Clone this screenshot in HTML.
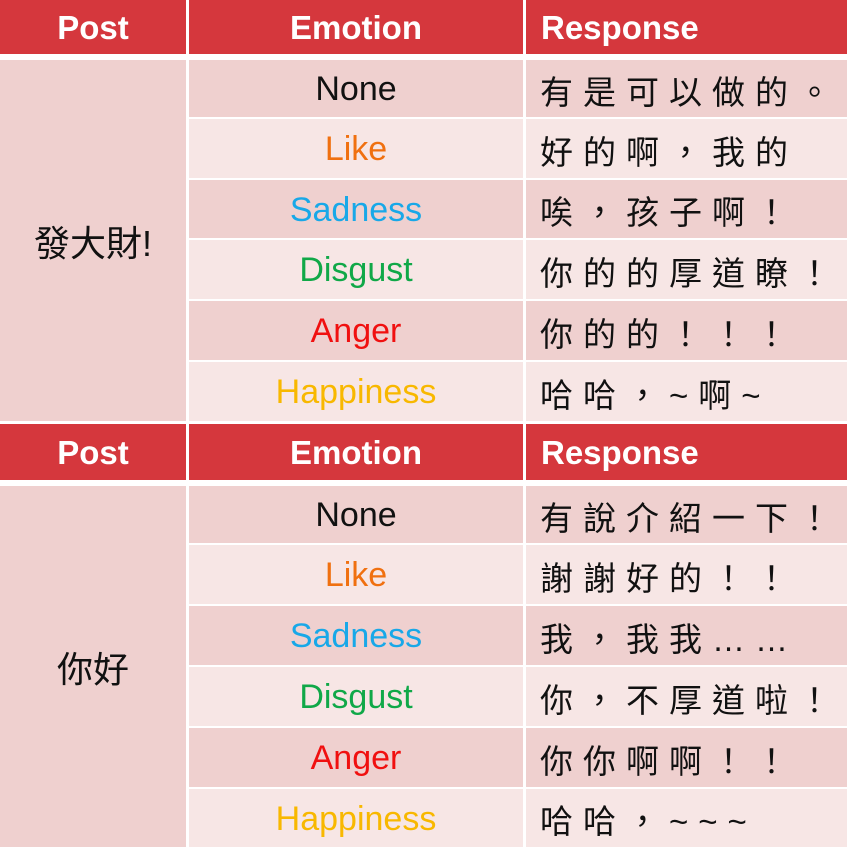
<!DOCTYPE html><html><head><meta charset="utf-8"><style>
body{margin:0;width:847px;height:847px;background:#fff;position:relative;overflow:hidden;font-family:"Liberation Sans","Noto Sans CJK TC",sans-serif}
div{position:absolute;box-sizing:border-box;display:flex;align-items:center}
.h{background:#d5373d;color:#fff;font-weight:bold;font-size:33px;justify-content:center;padding-top:2px}
.hr{justify-content:flex-start;padding-left:15px}
.d{background:#efd0cf}.l{background:#f7e6e5}
.e{justify-content:center;font-size:34px;padding-top:2px}
.r{padding-left:14px;font-size:33px;letter-spacing:10px;color:#111;white-space:pre;padding-top:2px}
.p{justify-content:center;font-size:36px;color:#111}
</style></head><body>
<div class="h" style="left:0;top:0;width:186px;height:54px">Post</div>
<div class="h" style="left:189px;top:0;width:334px;height:54px">Emotion</div>
<div class="h hr" style="left:526px;top:0;width:321px;height:54px">Response</div>
<div class="d p" style="left:0;top:60px;width:186px;height:361px">發大財!</div>
<div class="d e" style="left:189px;top:60px;width:334px;height:57px;color:#111">None</div>
<div class="l e" style="left:189px;top:119px;width:334px;height:59px;color:#f07010">Like</div>
<div class="d e" style="left:189px;top:180px;width:334px;height:58px;color:#18a8e8">Sadness</div>
<div class="l e" style="left:189px;top:240px;width:334px;height:59px;color:#10a848">Disgust</div>
<div class="d e" style="left:189px;top:301px;width:334px;height:59px;color:#f01010">Anger</div>
<div class="l e" style="left:189px;top:362px;width:334px;height:59px;color:#f8b800">Happiness</div>
<div class="d r" style="left:526px;top:60px;width:321px;height:57px">有是可以做的。</div>
<div class="l r" style="left:526px;top:119px;width:321px;height:59px">好的啊，我的</div>
<div class="d r" style="left:526px;top:180px;width:321px;height:58px">唉，孩子啊！</div>
<div class="l r" style="left:526px;top:240px;width:321px;height:59px">你的的厚道瞭！</div>
<div class="d r" style="left:526px;top:301px;width:321px;height:59px">你的的！！！</div>
<div class="l r" style="left:526px;top:362px;width:321px;height:59px">哈哈，~啊~</div>
<div class="h" style="left:0;top:424px;width:186px;height:56px">Post</div>
<div class="h" style="left:189px;top:424px;width:334px;height:56px">Emotion</div>
<div class="h hr" style="left:526px;top:424px;width:321px;height:56px">Response</div>
<div class="d p" style="left:0;top:486px;width:186px;height:361px">你好</div>
<div class="d e" style="left:189px;top:486px;width:334px;height:57px;color:#111">None</div>
<div class="l e" style="left:189px;top:545px;width:334px;height:59px;color:#f07010">Like</div>
<div class="d e" style="left:189px;top:606px;width:334px;height:59px;color:#18a8e8">Sadness</div>
<div class="l e" style="left:189px;top:667px;width:334px;height:59px;color:#10a848">Disgust</div>
<div class="d e" style="left:189px;top:728px;width:334px;height:59px;color:#f01010">Anger</div>
<div class="l e" style="left:189px;top:789px;width:334px;height:58px;color:#f8b800">Happiness</div>
<div class="d r" style="left:526px;top:486px;width:321px;height:57px">有說介紹一下！</div>
<div class="l r" style="left:526px;top:545px;width:321px;height:59px">謝謝好的！！</div>
<div class="d r" style="left:526px;top:606px;width:321px;height:59px">我，我我……</div>
<div class="l r" style="left:526px;top:667px;width:321px;height:59px">你，不厚道啦！</div>
<div class="d r" style="left:526px;top:728px;width:321px;height:59px">你你啊啊！！</div>
<div class="l r" style="left:526px;top:789px;width:321px;height:58px">哈哈，~~~</div>
</body></html>
